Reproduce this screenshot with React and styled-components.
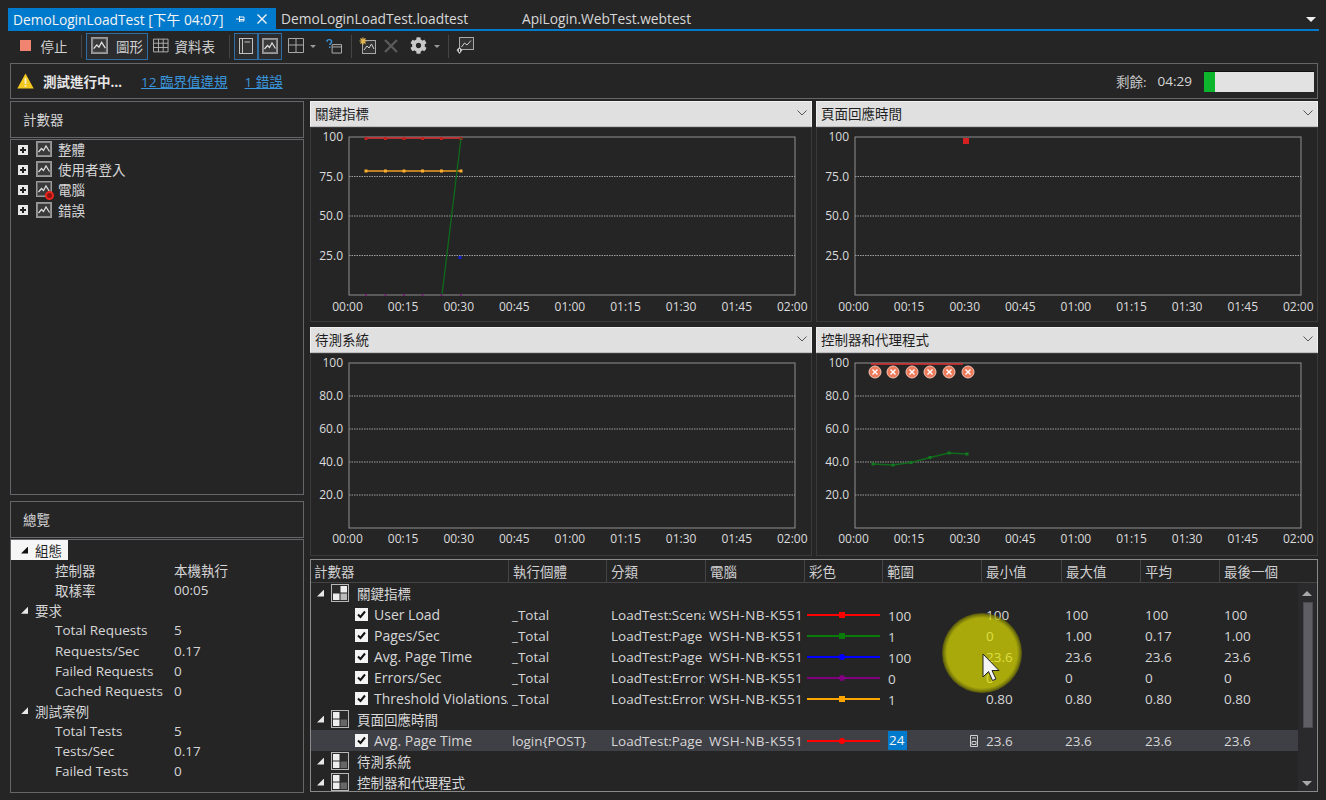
import React from 'react';
import styled, { createGlobalStyle } from 'styled-components';
import { FaCog } from 'react-icons/fa';

const FONT = '"Open Sans", "Noto Sans CJK TC", sans-serif';
const TIMES = ['00:00', '00:15', '00:30', '00:45', '01:00', '01:15', '01:30', '01:45', '02:00'];

const COLUMNS = [
  ['計數器', 197], ['執行個體', 98], ['分類', 99], ['電腦', 99], ['彩色', 78],
  ['範圍', 99], ['最小值', 80], ['最大值', 79], ['平均', 79], ['最後一個', 79],
];
const GRID = COLUMNS.map((c) => `${c[1]}px`).join(' ');

const ROWS = [
  { group: '關鍵指標' },
  { name: 'User Load', inst: '_Total', cat: 'LoadTest:Scenario', color: '#ff0000', range: '100', min: '100', max: '100', avg: '100', last: '100' },
  { name: 'Pages/Sec', inst: '_Total', cat: 'LoadTest:Page', color: '#0a7a0a', range: '1', min: '0', max: '1.00', avg: '0.17', last: '1.00' },
  { name: 'Avg. Page Time', inst: '_Total', cat: 'LoadTest:Page', color: '#0000ff', round: true, range: '100', min: '23.6', max: '23.6', avg: '23.6', last: '23.6' },
  { name: 'Errors/Sec', inst: '_Total', cat: 'LoadTest:Errors', color: '#800080', round: true, range: '0', min: '0', max: '0', avg: '0', last: '0' },
  { name: 'Threshold Violations/Sec', inst: '_Total', cat: 'LoadTest:Errors', color: '#ffa500', range: '1', min: '0.80', max: '0.80', avg: '0.80', last: '0.80' },
  { group: '頁面回應時間' },
  { name: 'Avg. Page Time', inst: 'login{POST}', cat: 'LoadTest:Page', color: '#ff0000', round: true, range: '24', min: '23.6', max: '23.6', avg: '23.6', last: '23.6', selected: true },
  { group: '待測系統' },
  { group: '控制器和代理程式' },
];

const GlobalStyle = createGlobalStyle`
  html, body {
    margin: 0;
    background: #252526;
    overflow: hidden;
  }
  * {
    box-sizing: border-box;
  }
`;

const Page = styled.div`
  width: 1326px;
  height: 800px;
  padding-top: 8px;
  background: #252526;
  color: #d6d6d6;
  font-family: ${FONT};
  font-size: 13.5px;
  overflow: hidden;
`;

const TabStrip = styled.div`
  display: flex;
  align-items: stretch;
  height: 23px;
  margin: 0 7px 0 8px;
  border-bottom: 2px solid #007acc;
  font-size: 13.75px;
`;

const ActiveTab = styled.div`
  display: flex;
  align-items: center;
  width: 268px;
  padding-left: 5px;
  background: #007acc;
  color: #f4f4f4;
  white-space: nowrap;
`;

const TabIcon = styled.svg`
  flex: none;
  margin-left: ${(p) => p.$left}px;
`;

const Tab = styled.div`
  display: flex;
  align-items: center;
  width: ${(p) => p.$width}px;
  padding-left: 5px;
  color: #d8d8d8;
  white-space: nowrap;
`;

const TabMenu = styled.div`
  width: 0;
  height: 0;
  margin: 9px 3px 0 auto;
  border-left: 5px solid transparent;
  border-right: 5px solid transparent;
  border-top: 5px solid #f0f0f0;
`;

const Toolbar = styled.div`
  display: flex;
  align-items: center;
  height: 31px;
  padding-left: 17px;
  white-space: nowrap;
`;

const ToolButton = styled.div`
  display: flex;
  align-items: center;
  justify-content: center;
  gap: ${(p) => p.$gap ?? 8}px;
  flex: none;
  width: ${(p) => p.$width}px;
  height: 27px;
  margin-left: ${(p) => p.$left ?? 0}px;
  padding-bottom: 2px;
  border: 1px solid ${(p) => (p.$active ? '#2f6ea5' : 'transparent')};
  background: ${(p) => (p.$active ? '#2c2c2e' : 'transparent')};
  color: #d2d2d2;
`;

const ToolSep = styled.div`
  flex: none;
  width: 1px;
  height: 23px;
  margin-left: ${(p) => p.$left}px;
  background: #444447;
`;

const StopSquare = styled.span`
  width: 11px;
  height: 11px;
  background: #f08470;
`;

const Caret = styled.span`
  flex: none;
  width: 0;
  height: 0;
  margin-left: ${(p) => p.$left}px;
  border-left: 3px solid transparent;
  border-right: 3px solid transparent;
  border-top: 3px solid #9a9a9a;
`;

const StatusBar = styled.div`
  display: flex;
  align-items: center;
  height: 36px;
  margin: 1px 8px 0 10px;
  padding: 0 3px 0 6px;
  border: 1px solid #66666a;
`;

const StatusText = styled.span`
  margin-left: 9px;
  margin-right: 19px;
  font-weight: 700;
  font-size: 13.5px;
  color: #e6e6e6;
`;

const StatusLink = styled.a`
  margin-right: 17px;
  color: #3a96dd;
  text-decoration: underline;
`;

const Remaining = styled.span`
  margin-left: auto;
  color: #c8c8c8;
`;

const RemainingTime = styled.span`
  margin: 0 12px 0 11px;
  color: #d6d6d6;
`;

const Progress = styled.div`
  width: 110px;
  height: 21px;
  border-top: 1px solid #111;
  background: #e2e2e2;
`;

const ProgressFill = styled.div`
  height: 100%;
  background: #0db52d;
`;

const Main = styled.div`
  display: grid;
  grid-template-columns: 294px 1008px;
  column-gap: 6px;
  margin: 1px 0 0 10px;
`;

const LeftColumn = styled.div`
  display: flex;
  flex-direction: column;
  padding-top: 1px;
`;

const PaneTitle = styled.div`
  display: flex;
  align-items: center;
  height: 37px;
  margin-top: ${(p) => p.$top ?? 0}px;
  margin-bottom: 1px;
  padding: 0 0 2px 12px;
  border: 1px solid #66666a;
  color: #d6d6d6;
`;

const TreePane = styled.div`
  height: 356px;
  border: 1px solid #66666a;
`;

const TreeRow = styled.div`
  display: flex;
  align-items: center;
  height: 20.2px;
  padding: 0 0 2px 7px;
`;

const Expander = styled.span`
  position: relative;
  flex: none;
  width: 10px;
  height: 10px;
  margin: 1px 8px 0 0;
  background: #e8e8e8;
  &::before, &::after {
    content: '';
    position: absolute;
    background: #222;
  }
  &::before {
    left: 2px;
    top: 4px;
    width: 6px;
    height: 2px;
  }
  &::after {
    left: 4px;
    top: 2px;
    width: 2px;
    height: 6px;
  }
`;

const TreeIconWrap = styled.span`
  position: relative;
  flex: none;
  display: flex;
  width: 16px;
  height: 16px;
  margin-right: 6px;
`;

const ErrorBadge = styled.span`
  position: absolute;
  right: -2px;
  bottom: -3px;
  width: 9px;
  height: 9px;
  border-radius: 50%;
  background: #8a1414;
  border: 2px solid #e8261e;
`;

const SummaryPane = styled.div`
  height: 254px;
  border: 1px solid #66666a;
`;

const SummaryRow = styled.div`
  display: flex;
  align-items: center;
  height: 20.1px;
  width: ${(p) => (p.$selected ? '57px' : 'auto')};
  padding-left: ${(p) => (p.$group ? 10 : 44)}px;
  background: ${(p) => (p.$selected ? '#f6f6f6' : 'transparent')};
  color: ${(p) => (p.$selected ? '#222' : '#d6d6d6')};
  white-space: nowrap;
`;

const Arrow = styled.span`
  flex: none;
  width: 7px;
  height: 7px;
  margin-right: ${(p) => p.$right}px;
  background: ${(p) => (p.$dark ? '#111' : '#e8e8e8')};
  clip-path: polygon(100% 0, 100% 100%, 0 100%);
`;

const SummaryLabel = styled.span`
  width: 119px;
  flex: none;
`;

const RightColumn = styled.div`
  display: flex;
  flex-direction: column;
`;

const ChartGrid = styled.div`
  display: grid;
  grid-template-columns: 502px 502px;
  grid-template-rows: 221px 229px;
  gap: 5px 4px;
  margin-top: 1px;
`;

const ChartPanel = styled.div`
  display: flex;
  flex-direction: column;
`;

const ChartSelect = styled.div`
  display: flex;
  align-items: center;
  justify-content: space-between;
  flex: none;
  height: 26px;
  padding: 0 4px 2px 4px;
  border: 1px solid #f0f0f0;
  border-bottom-color: #bdbdbd;
  background: #e0e0e0;
  color: #1e1e1e;
`;

const ChartBody = styled.svg`
  display: block;
  flex: 1;
  width: 502px;
  border: 1px solid #3a3a3c;
  background: #252526;
`;

const AxisText = styled.text`
  font-family: ${FONT};
  font-size: 12px;
  fill: #dcdcdc;
`;

const CounterTable = styled.div`
  position: relative;
  height: 233px;
  margin-top: 3px;
  border: 1px solid #8a8a8a;
  overflow: hidden;
`;

const HeaderRow = styled.div`
  display: grid;
  grid-template-columns: ${GRID};
  height: 23px;
  border-bottom: 1px solid #444447;
`;

const HeaderCell = styled.div`
  display: flex;
  align-items: center;
  padding-left: ${(p) => (p.$first ? 3 : 4)}px;
  border-left: ${(p) => (p.$first ? 'none' : '1px solid #444447')};
  color: #d0d0d0;
`;

const TableBody = styled.div`
  width: 987px;
`;

const GroupRow = styled.div`
  display: flex;
  align-items: center;
  height: 21px;
  padding: 0 0 1px 6px;
  color: #d8d8d8;
`;

const GroupIcon = styled.svg`
  flex: none;
  margin: 0 8px 0 7px;
`;

const DataRow = styled.div`
  display: grid;
  grid-template-columns: ${GRID};
  align-items: center;
  height: 21px;
  background: ${(p) => (p.$selected ? '#3f3f46' : 'transparent')};
`;

const NameCell = styled.div`
  display: flex;
  align-items: center;
  padding-left: 44px;
  font-size: 14px;
  overflow: hidden;
  white-space: nowrap;
`;

const CheckBox = styled.span`
  display: flex;
  align-items: center;
  justify-content: center;
  flex: none;
  width: 13px;
  height: 13px;
  margin-right: 6px;
  background: #f4f4f4;
`;

const Cell = styled.div`
  padding-left: ${(p) => p.$left ?? 5}px;
  overflow: hidden;
  white-space: nowrap;
`;

const MachineCell = styled(Cell)`
  letter-spacing: 0.5px;
`;

const LegendCell = styled.div`
  position: relative;
  height: 2px;
  margin: 0 2px 0 3px;
  background: ${(p) => p.$color};
  &::after {
    content: '';
    position: absolute;
    left: 32px;
    top: -2px;
    width: 6px;
    height: 6px;
    border-radius: ${(p) => (p.$round ? '50%' : '0')};
    background: ${(p) => p.$color};
  }
`;

const RangeCell = styled.div`
  display: flex;
  align-items: center;
  justify-content: space-between;
  padding: ${(p) => (p.$selected ? '0' : '2px')} 3px 0 6px;
`;

const RangeEdit = styled.span`
  display: block;
  width: 19px;
  height: 19px;
  padding-left: 1px;
  line-height: 19px;
  background: #007acc;
  color: #f4f4f4;
`;

const ScrollBar = styled.div`
  position: absolute;
  right: 1px;
  top: 23px;
  bottom: 0;
  width: 18px;
  background: #2a2a2c;
`;

const ScrollThumb = styled.div`
  position: absolute;
  left: 5px;
  top: 19px;
  width: 10px;
  height: 126px;
  border: 1px solid #4a4a50;
  background: #5e5e64;
`;

const ScrollArrow = styled.span`
  position: absolute;
  left: 4px;
  ${(p) => (p.$down ? 'bottom: 5px;' : 'top: 8px;')}
  width: 0;
  height: 0;
  border-left: 5px solid transparent;
  border-right: 5px solid transparent;
  ${(p) => (p.$down ? 'border-top: 5px solid #a8a8a8;' : 'border-bottom: 5px solid #a8a8a8;')}
`;

const Highlight = styled.div`
  position: absolute;
  left: 631px;
  top: 53px;
  width: 80px;
  height: 80px;
  border-radius: 50%;
  background: radial-gradient(circle, rgba(225, 225, 0, 0.7) 0 35px, rgba(170, 170, 0, 0.7) 37.5px, rgba(110, 110, 0, 0.6) 40px);
`;

const Pointer = styled.svg`
  position: absolute;
  left: 671px;
  top: 93px;
`;

const ChartIcon = ({ size = 16, dim }) => (
  <svg width={size} height={size} viewBox="0 0 16 16">
    <rect x="0.5" y="0.5" width="15" height="15" fill={dim ? '#6b6b6b' : '#8a8a8a'} stroke="#9a9a9a" />
    <rect x="2" y="2" width="12" height="12" fill="#3a3a3a" />
    <path d="M2.5 11 L5.5 7.5 L7.5 9.5 L10 5 L13.5 10.5" fill="none" stroke="#e0e0e0" strokeWidth="1.2" />
  </svg>
);

const TableIcon = () => (
  <svg width="17" height="15" viewBox="0 0 17 15">
    <path d="M0.5 0.5H16.5V14.5H0.5Z M0.5 5H16.5 M0.5 9.7H16.5 M6 0.5V14.5 M11.2 0.5V14.5" fill="none" stroke="#b8b8b8" />
  </svg>
);

const NotebookIcon = () => (
  <svg width="14" height="16" viewBox="0 0 14 16">
    <rect x="0.5" y="0.5" width="13" height="15" fill="#333" stroke="#c0c0c0" />
    <path d="M3.5 0.5V15.5 M5.5 4H11" stroke="#c0c0c0" fill="none" />
  </svg>
);

const LayoutIcon = () => (
  <svg width="16" height="15" viewBox="0 0 16 15">
    <path d="M0.5 0.5H15.5V14.5H0.5Z M0.5 7H15.5 M8 0.5V14.5" fill="none" stroke="#a8a8a8" />
  </svg>
);

const HelpBoxIcon = () => (
  <svg width="17" height="16" viewBox="0 0 17 16">
    <path d="M1 3.5C1 0.5 6 0.5 6 3.5C6 5 4 5 4 7" fill="none" stroke="#3a96dd" strokeWidth="1.5" />
    <rect x="3.2" y="8.5" width="1.6" height="1.6" fill="#3a96dd" />
    <path d="M6.5 6.5H16.5V15.5H6.5Z M6.5 9H16.5" fill="none" stroke="#b4b4b4" />
  </svg>
);

const AddChartIcon = () => (
  <svg width="18" height="18" viewBox="0 0 18 18">
    <rect x="3.5" y="3.5" width="13" height="13" fill="#333" stroke="#a8a8a8" />
    <path d="M5 13L8 9L10 11L12.5 7L15 12" fill="none" stroke="#d0d0d0" />
    <path d="M4 0.5V7.5 M0.5 4H7.5 M1.5 1.5L6.5 6.5 M6.5 1.5L1.5 6.5" stroke="#e8b850" strokeWidth="1.2" />
  </svg>
);

const DeleteIcon = () => (
  <svg width="14" height="14" viewBox="0 0 14 14">
    <path d="M1 1L13 13 M13 1L1 13" stroke="#5a5a5c" strokeWidth="2.4" />
  </svg>
);

const ExportChartIcon = () => (
  <svg width="18" height="18" viewBox="0 0 18 18">
    <rect x="3.5" y="0.5" width="14" height="12" fill="#333" stroke="#a8a8a8" />
    <path d="M5.5 10L8.5 6L11 8L15 3.5" fill="none" stroke="#d0d0d0" />
    <path d="M3.5 10L6.5 13L3.5 17L0.5 13Z" fill="#c8c8c8" />
    <rect x="3" y="12" width="1" height="3" fill="#222" />
  </svg>
);

const WarningIcon = () => (
  <svg width="17" height="16" viewBox="0 0 17 16">
    <path d="M8.5 0.5L16.7 15.5H0.3Z" fill="#f4c91f" />
    <rect x="7.6" y="5" width="1.8" height="6" fill="#f7f0c8" />
    <rect x="7.6" y="12" width="1.8" height="1.8" fill="#f7f0c8" />
  </svg>
);

const Chevron = () => (
  <svg width="10" height="6" viewBox="0 0 10 6">
    <path d="M0.5 0.5L5 5L9.5 0.5" fill="none" stroke="#555" />
  </svg>
);

const FourPane = ({ variant }) => (
  <GroupIcon width="18" height="18" viewBox="0 0 18 18">
    <rect x="0.5" y="0.5" width="17" height="17" fill="#2b2b2b" stroke="#b8b8b8" />
    <rect x="2" y="2" width="6.5" height="6.5" fill={variant ? '#eee' : '#2b2b2b'} />
    <rect x="9.5" y="2" width="6.5" height="6.5" fill={variant ? '#2b2b2b' : '#eee'} />
    <rect x="2" y="9.5" width="6.5" height="6.5" fill="#eee" />
    <rect x="9.5" y="9.5" width="6.5" height="6.5" fill={variant ? '#666' : '#bbb'} />
  </GroupIcon>
);

const Check = () => (
  <svg width="11" height="11" viewBox="0 0 11 11">
    <path d="M2 5.5L4.5 8L9 2.5" fill="none" stroke="#111" strokeWidth="2" />
  </svg>
);

const ErrorMark = ({ x, y }) => (
  <g>
    <circle cx={x} cy={y} r="6" fill="#ee7a5c" stroke="#f3c5b4" />
    <path d={`M${x - 2.5} ${y - 2.5}L${x + 2.5} ${y + 2.5}M${x + 2.5} ${y - 2.5}L${x - 2.5} ${y + 2.5}`} stroke="#fff" strokeWidth="1.4" />
  </g>
);

const Plot = ({ yLabels, bottom, height, labelGap, children }) => {
  const top = 10;
  const left = 39;
  const right = 485;
  const step = (bottom - top) / yLabels.length;
  return (
    <ChartBody viewBox={`1 1 500 ${height - 2}`} height={height}>
      {yLabels.map((label, i) => {
        const y = top + step * i;
        return (
          <g key={label}>
            {i > 0 && <path d={`M${left} ${y}H${right}`} stroke="#a0a0a0" strokeDasharray="1.5 1" />}
            <AxisText x="33" y={y + 4} textAnchor="end">{label}</AxisText>
          </g>
        );
      })}
      <rect x={left} y={top} width={right - left} height={bottom - top} fill="none" stroke="#909090" />
      {TIMES.map((t, i) => (
        <AxisText key={t} x={37.5 + i * 55.6} y={bottom + labelGap} textAnchor="middle">{t}</AxisText>
      ))}
      {children}
    </ChartBody>
  );
};

const Chart = ({ title, children }) => (
  <ChartPanel>
    <ChartSelect>
      {title}
      <Chevron />
    </ChartSelect>
    {children}
  </ChartPanel>
);

const MARKS = [56, 75.5, 94, 112.5, 131.5, 151];

const KeyIndicators = () => (
  <>
    <path d="M56 11H151" stroke="#e03030" strokeWidth="1.6" />
    {MARKS.map((x) => <rect key={`r${x}`} x={x - 1.5} y="10" width="3" height="3" fill="#c02020" />)}
    <path d="M56 44H152" stroke="#f0a020" strokeWidth="1.4" />
    {MARKS.map((x) => <rect key={`o${x}`} x={x - 1.5} y="42.5" width="3" height="3" fill="#ffb030" />)}
    <path d="M132 168L151 11" stroke="#0f6a1a" strokeWidth="1.3" />
    <rect x="148.5" y="129" width="3" height="3" fill="#1020d0" />
    {MARKS.map((x) => <rect key={`p${x}`} x={x - 1} y="167" width="2" height="2" fill="#702070" />)}
  </>
);

const AgentSeries = () => (
  <>
    <path d="M55 11H147" stroke="#e03030" strokeWidth="1.6" />
    {[59, 77, 96, 114, 133, 152].map((x) => <ErrorMark key={x} x={x} y={19} />)}
    <path d="M57 111L77 112L95 109.5L114 104.500L133 100L151 101" fill="none" stroke="#0f6a1a" strokeWidth="1.3" />
    {[[57, 111], [77, 112], [95, 109.5], [114, 104.5], [133, 100], [151, 101]].map(([x, y]) => (
      <rect key={x} x={x - 1.5} y={y - 1.5} width="3" height="3" fill="#127a20" />
    ))}
  </>
);

const App = () => (
  <Page>
    <GlobalStyle />
    <TabStrip>
      <ActiveTab>
        DemoLoginLoadTest [下午 04:07]
        <TabIcon $left={13} width="10" height="10" viewBox="0 0 10 10">
          <path d="M0 5H3 M3.500 2V8 M3.500 3H8V7H3.500 M3.500 5.500H8" fill="none" stroke="#f4f4f4" />
        </TabIcon>
        <TabIcon $left={11} width="10" height="10" viewBox="0 0 10 10">
          <path d="M0.500 0.500L9.500 9.500 M9.500 0.500L0.500 9.500" stroke="#f4f4f4" strokeWidth="1.4" />
        </TabIcon>
      </ActiveTab>
      <Tab $width={241}>DemoLoginLoadTest.loadtest</Tab>
      <Tab $width={200}>ApiLogin.WebTest.webtest</Tab>
      <TabMenu />
    </TabStrip>

    <Toolbar>
      <ToolButton $width={53} $gap={10}><StopSquare />停止</ToolButton>
      <ToolSep $left={11} />
      <ToolButton $width={62} $left={4} $active><ChartIcon size={17} />圖形</ToolButton>
      <ToolButton $width={64} $left={4} $gap={6}><TableIcon />資料表</ToolButton>
      <ToolSep $left={13} />
      <ToolButton $width={24} $left={4} $active><NotebookIcon /></ToolButton>
      <ToolButton $width={24} $active><ChartIcon /></ToolButton>
      <ToolButton $width={18} $left={5}><LayoutIcon /></ToolButton>
      <Caret $left={5} />
      <ToolButton $width={18} $left={9}><HelpBoxIcon /></ToolButton>
      <ToolSep $left={8} />
      <ToolButton $width={20} $left={6}><AddChartIcon /></ToolButton>
      <ToolButton $width={16} $left={5}><DeleteIcon /></ToolButton>
      <ToolButton $width={20} $left={9}><FaCog size={17} color="#c8c8c8" /></ToolButton>
      <Caret $left={6} />
      <ToolSep $left={8} />
      <ToolButton $width={20} $left={6}><ExportChartIcon /></ToolButton>
    </Toolbar>

    <StatusBar>
      <WarningIcon />
      <StatusText>測試進行中…</StatusText>
      <StatusLink>12 臨界值違規</StatusLink>
      <StatusLink>1 錯誤</StatusLink>
      <Remaining>剩餘:</Remaining>
      <RemainingTime>04:29</RemainingTime>
      <Progress>
        <ProgressFill style={{ width: `${(11 / 110) * 100}%` }} />
      </Progress>
    </StatusBar>

    <Main>
      <LeftColumn>
        <PaneTitle>計數器</PaneTitle>
        <TreePane>
          {['整體', '使用者登入', '電腦', '錯誤'].map((label) => (
            <TreeRow key={label}>
              <Expander />
              <TreeIconWrap>
                <ChartIcon dim={label === '電腦'} />
                {label === '電腦' && <ErrorBadge />}
              </TreeIconWrap>
              {label}
            </TreeRow>
          ))}
        </TreePane>
        <PaneTitle $top={6}>總覽</PaneTitle>
        <SummaryPane>
          <SummaryRow $group $selected><Arrow $dark $right={7} />組態</SummaryRow>
          <SummaryRow><SummaryLabel>控制器</SummaryLabel>本機執行</SummaryRow>
          <SummaryRow><SummaryLabel>取樣率</SummaryLabel>00:05</SummaryRow>
          <SummaryRow $group><Arrow $right={7} />要求</SummaryRow>
          <SummaryRow><SummaryLabel>Total Requests</SummaryLabel>5</SummaryRow>
          <SummaryRow><SummaryLabel>Requests/Sec</SummaryLabel>0.17</SummaryRow>
          <SummaryRow><SummaryLabel>Failed Requests</SummaryLabel>0</SummaryRow>
          <SummaryRow><SummaryLabel>Cached Requests</SummaryLabel>0</SummaryRow>
          <SummaryRow $group><Arrow $right={7} />測試案例</SummaryRow>
          <SummaryRow><SummaryLabel>Total Tests</SummaryLabel>5</SummaryRow>
          <SummaryRow><SummaryLabel>Tests/Sec</SummaryLabel>0.17</SummaryRow>
          <SummaryRow><SummaryLabel>Failed Tests</SummaryLabel>0</SummaryRow>
        </SummaryPane>
      </LeftColumn>

      <RightColumn>
        <ChartGrid>
          <Chart title="關鍵指標">
            <Plot yLabels={['100', '75.0', '50.0', '25.0']} bottom={168} height={195} labelGap={16}>
              <KeyIndicators />
            </Plot>
          </Chart>
          <Chart title="頁面回應時間">
            <Plot yLabels={['100', '75.0', '50.0', '25.0']} bottom={168} height={195} labelGap={16}>
              <rect x="147" y="11" width="6" height="6" fill="#d42020" />
            </Plot>
          </Chart>
          <Chart title="待測系統">
            <Plot yLabels={['100', '80.0', '60.0', '40.0', '20.0']} bottom={175} height={203} labelGap={15} />
          </Chart>
          <Chart title="控制器和代理程式">
            <Plot yLabels={['100', '80.0', '60.0', '40.0', '20.0']} bottom={175} height={203} labelGap={15}>
              <AgentSeries />
            </Plot>
          </Chart>
        </ChartGrid>

        <CounterTable>
          <HeaderRow>
            {COLUMNS.map(([label], i) => (
              <HeaderCell key={label} $first={i === 0}>{label}</HeaderCell>
            ))}
          </HeaderRow>
          <TableBody>
            {ROWS.map((row, i) => (row.group ? (
              <GroupRow key={row.group}>
                <Arrow $right={0} />
                <FourPane variant={i > 0} />
                {row.group}
              </GroupRow>
            ) : (
              <DataRow key={i} $selected={row.selected}>
                <NameCell>
                  <CheckBox><Check /></CheckBox>
                  {row.name}
                </NameCell>
                <Cell $left={4}>{row.inst}</Cell>
                <Cell>{row.cat}</Cell>
                <MachineCell $left={4}>WSH-NB-K551</MachineCell>
                <LegendCell $color={row.color} $round={row.round} />
                <RangeCell $selected={row.selected}>
                  {row.selected ? <RangeEdit>24</RangeEdit> : row.range}
                  {row.selected && (
                    <svg width="8" height="12" viewBox="0 0 8 12">
                      <path d="M0.500 0.500H7.500V11.500H0.500Z M2 3H6 M2 6.500H6V9.500H2Z" fill="none" stroke="#d0d0d0" />
                    </svg>
                  )}
                </RangeCell>
                <Cell>{row.min}</Cell>
                <Cell $left={4}>{row.max}</Cell>
                <Cell>{row.avg}</Cell>
                <Cell>{row.last}</Cell>
              </DataRow>
            )))}
          </TableBody>
          <ScrollBar>
            <ScrollArrow />
            <ScrollThumb />
            <ScrollArrow $down />
          </ScrollBar>
          <Highlight />
          <Pointer width="18" height="29" viewBox="0 0 18 29">
            <path d="M1 1V24L6.500 18.500L10.500 27.500L14 26L10 17.500H17Z" fill="#f4f4f4" stroke="#222" strokeWidth="1" />
          </Pointer>
        </CounterTable>
      </RightColumn>
    </Main>
  </Page>
);

export default App;
